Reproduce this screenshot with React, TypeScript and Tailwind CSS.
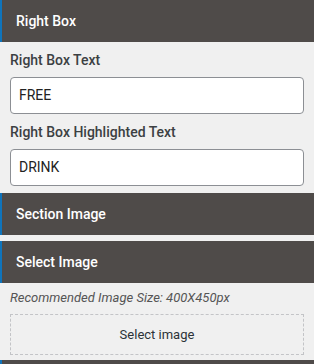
import React from "react";

function Header({ title }: { title: string }) {
  return (
    <div className="h-[42px] bg-[#4f4b49] border-l-2 border-[#0f74bb] flex items-center pl-[14px]">
      <span className="text-white text-[14px] font-medium">{title}</span>
    </div>
  );
}

export default function App() {
  return (
    <div
      className="w-[314px] h-[364px] bg-[#f0f0f0] overflow-hidden"
      style={{ fontFamily: "Roboto, 'Liberation Sans', sans-serif" }}
    >
      <Header title="Right Box" />
      <div className="px-[10px] pt-[10px] pb-[7px]">
        <div className="text-[14px] font-medium text-[#3c4043] leading-[17px]">Right Box Text</div>
        <div className="mt-[8px] h-[37px] bg-white border border-[#8c8f94] rounded-[4px] flex items-center px-[8px] text-[14px] text-[#222]">
          FREE
        </div>
        <div className="mt-[10px] text-[14px] font-medium text-[#3c4043] leading-[17px]">Right Box Highlighted Text</div>
        <div className="mt-[8px] h-[37px] bg-white border border-[#8c8f94] rounded-[4px] flex items-center px-[8px] text-[14px] text-[#222]">
          DRINK
        </div>
      </div>
      <Header title="Section Image" />
      <div className="h-[6px]" />
      <Header title="Select Image" />
      <div className="px-[10px] pt-[7px]">
        <div className="text-[13px] italic text-[#555] leading-[16px]">Recommended Image Size: 400X450px</div>
        <div className="mt-[8px] h-[41px] border border-dashed border-[#c3c4c7] flex items-center justify-center text-[13px] text-[#2c3338]">
          Select image
        </div>
      </div>
      <div className="mt-[5px]">
        <Header title="" />
      </div>
    </div>
  );
}
